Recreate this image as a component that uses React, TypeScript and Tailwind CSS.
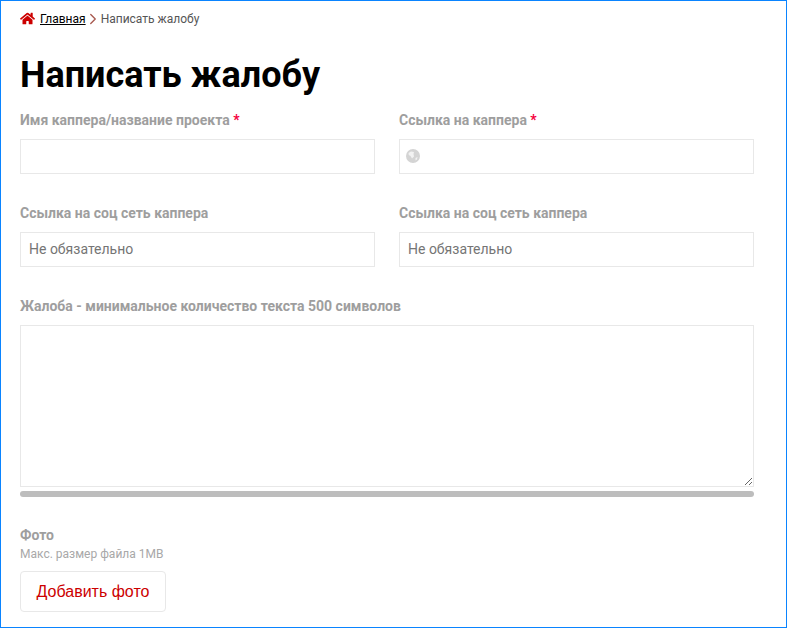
import { ChevronRight } from 'lucide-react';
import { FaHome } from 'react-icons/fa';

function Label({ text, required }: { text: string; required?: boolean }) {
  return (
    <label className="block h-[20px] text-[14px] leading-[20px] font-bold text-[#9e9e9e]">
      {text}
      {required && <span className="text-[#f5003d]"> *</span>}
    </label>
  );
}

function Globe() {
  return (
    <svg viewBox="0 0 14 14" className="h-[14px] w-[14px]">
      <circle cx="7" cy="7" r="7" fill="#d4d4d4" />
      <path d="M2.5 4 L5 2.5 L8 3 L7.5 5 L8 7.5 L6 9.5 L4.5 7 L2.8 6 Z" fill="#f2f2f2" />
      <path d="M9.5 9 L11.5 8 L11 10.5 L9.5 11.5 Z" fill="#f2f2f2" />
    </svg>
  );
}

const inputClass =
  'block h-[35px] w-full border border-[#e8e8e8] bg-white px-2 pb-[2px] text-[14px] text-[#666] outline-none placeholder:text-[#757575]';

export default function App() {
  return (
    <div
      className="h-[628px] w-[787px] overflow-hidden border border-[#0a84ff] bg-white pt-[8px] pr-[32px] pl-[19px]"
      style={{ fontFamily: 'Roboto, "Liberation Sans", sans-serif' }}
    >
      <div className="flex h-[20px] items-center text-[12px] text-[#555]">
        <FaHome className="mr-[5px] h-[15px] w-[15px] -translate-y-[1px] text-[#cc0000]" />
        <a href="#" className="text-[12px] text-black underline">
          Главная
        </a>
        <ChevronRight className="-ml-[2px] h-[18px] w-[18px] text-[#a85a50]" strokeWidth={1.8} />
        <span className="-ml-[1px]">Написать жалобу</span>
      </div>

      <h1 className="mt-[21px] h-[50px] text-[36px] leading-[50px] font-bold text-black">Написать жалобу</h1>

      <form className="mt-[10px]">
        <div className="grid grid-cols-2 gap-x-[24px] gap-y-[29px]">
          <div>
            <Label text="Имя каппера/название проекта" required />
            <input className={`${inputClass} mt-[9px]`} />
          </div>
          <div>
            <Label text="Ссылка на каппера" required />
            <div className="relative mt-[9px]">
              <input className={inputClass} />
              <span className="absolute top-[10px] left-[7px]">
                <Globe />
              </span>
            </div>
          </div>
          <div>
            <Label text="Ссылка на соц сеть каппера" />
            <input className={`${inputClass} mt-[9px]`} placeholder="Не обязательно" />
          </div>
          <div>
            <Label text="Ссылка на соц сеть каппера" />
            <input className={`${inputClass} mt-[9px]`} placeholder="Не обязательно" />
          </div>
        </div>

        <div className="mt-[29px]">
          <Label text="Жалоба - минимальное количество текста 500 символов" />
          <textarea className="mt-[9px] block h-[162px] w-full border border-[#e8e8e8] bg-white outline-none" />
          <div className="mt-[4px] h-[6px] rounded-full bg-[#bdbdbd]" />
        </div>

        <div className="mt-[28px]">
          <Label text="Фото" />
          <div className="mt-[1px] text-[12px] leading-[16px] text-[#a8a8a8]">Макс. размер файла 1MB</div>
          <button
            type="button"
            className="mt-[9px] h-[41px] w-[146px] rounded-[4px] border border-[#e8e8e8] bg-white text-[16px] text-[#cc0000]"
            style={{ fontFamily: '"Liberation Sans", sans-serif' }}
          >
            Добавить фото
          </button>
        </div>
      </form>
    </div>
  );
}
